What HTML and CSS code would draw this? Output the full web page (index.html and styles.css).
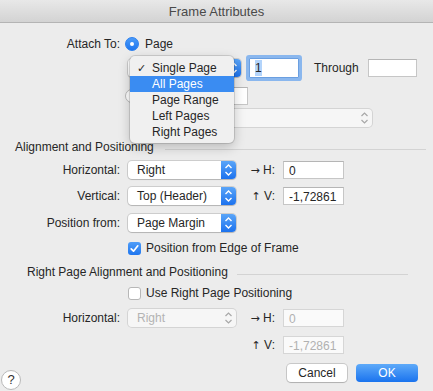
FILE: index.html
```html
<!DOCTYPE html>
<html lang="en">
<head>
  <meta charset="UTF-8">
  <title>Frame Attributes</title>
  <link rel="stylesheet" href="styles.css">
</head>
<body>
  <div class="window">
    <div class="titlebar">Frame Attributes</div>

    <div class="content">
      <!-- Attach to -->
      <div class="row attach">
        <span class="label">Attach To:</span>
        <span class="radio on"></span>
        <span class="radio-text">Page</span>
      </div>

      <div class="row range">
        <div class="popup page-popup">
          <span class="popup-text"></span>
          <span class="arrows blue">
            <svg width="15" height="18" viewBox="0 0 15 18"><path d="M4.5 7 L7.5 4 L10.5 7 M4.5 11 L7.5 14 L10.5 11" fill="none" stroke="#fff" stroke-width="1.4"/></svg>
          </span>
        </div>
        <div class="field focus num"><span class="sel">1</span></div>
        <span class="through">Through</span>
        <div class="field through-field"></div>
      </div>

      <div class="row other">
        <span class="radio"></span>
        <div class="field other-field"></div>
      </div>

      <div class="row master">
        <div class="popup disabled wide-popup">
          <span class="popup-text"></span>
          <span class="arrows">
            <svg width="15" height="18" viewBox="0 0 15 18"><path d="M4.5 7 L7.5 4 L10.5 7 M4.5 11 L7.5 14 L10.5 11" fill="none" stroke="#a8a8a8" stroke-width="1.2"/></svg>
          </span>
        </div>
      </div>

      <!-- Alignment and Positioning -->
      <div class="section first">
        <span>Alignment and Positioning</span>
        <span class="rule"></span>
      </div>

      <div class="row ctl">
        <span class="label">Horizontal:</span>
        <div class="popup">
          <span class="popup-text">Right</span>
          <span class="arrows blue">
            <svg width="15" height="18" viewBox="0 0 15 18"><path d="M4.5 7 L7.5 4 L10.5 7 M4.5 11 L7.5 14 L10.5 11" fill="none" stroke="#fff" stroke-width="1.4"/></svg>
          </span>
        </div>
        <span class="mini"><span class="arr">&rarr;</span> H:</span>
        <div class="field val">0</div>
      </div>

      <div class="row ctl vert">
        <span class="label">Vertical:</span>
        <div class="popup">
          <span class="popup-text">Top (Header)</span>
          <span class="arrows blue">
            <svg width="15" height="18" viewBox="0 0 15 18"><path d="M4.5 7 L7.5 4 L10.5 7 M4.5 11 L7.5 14 L10.5 11" fill="none" stroke="#fff" stroke-width="1.4"/></svg>
          </span>
        </div>
        <span class="mini"><span class="arr">&uarr;</span> V:</span>
        <div class="field val">-1,72861</div>
      </div>

      <div class="row ctl posfrom">
        <span class="label">Position from:</span>
        <div class="popup">
          <span class="popup-text">Page Margin</span>
          <span class="arrows blue">
            <svg width="15" height="18" viewBox="0 0 15 18"><path d="M4.5 7 L7.5 4 L10.5 7 M4.5 11 L7.5 14 L10.5 11" fill="none" stroke="#fff" stroke-width="1.4"/></svg>
          </span>
        </div>
      </div>

      <div class="row check-row edge">
        <span class="checkbox on">
          <svg width="13" height="13" viewBox="0 0 13 13"><path d="M3.2 6.8 L5.5 9.2 L9.8 3.8" fill="none" stroke="#fff" stroke-width="1.7" stroke-linecap="round" stroke-linejoin="round"/></svg>
        </span>
        <span>Position from Edge of Frame</span>
      </div>

      <!-- Right Page Alignment -->
      <div class="section second">
        <span>Right Page Alignment and Positioning</span>
        <span class="rule"></span>
      </div>

      <div class="row check-row use-right">
        <span class="checkbox"></span>
        <span>Use Right Page Positioning</span>
      </div>

      <div class="row ctl horiz2">
        <span class="label">Horizontal:</span>
        <div class="popup disabled">
          <span class="popup-text">Right</span>
          <span class="arrows">
            <svg width="15" height="18" viewBox="0 0 15 18"><path d="M4.5 7 L7.5 4 L10.5 7 M4.5 11 L7.5 14 L10.5 11" fill="none" stroke="#a8a8a8" stroke-width="1.2"/></svg>
          </span>
        </div>
        <span class="mini"><span class="arr">&rarr;</span> H:</span>
        <div class="field val disabled">0</div>
      </div>

      <div class="row ctl v2">
        <span class="label"></span>
        <span class="spacer"></span>
        <span class="mini"><span class="arr">&uarr;</span> V:</span>
        <div class="field val disabled">-1,72861</div>
      </div>

      <div class="footer">
        <span class="help">?</span>
        <button class="btn cancel">Cancel</button>
        <button class="btn ok">OK</button>
      </div>
    </div>

    <!-- open popup menu -->
    <div class="menu">
      <div class="item"><span class="tick">&#10003;</span>Single Page</div>
      <div class="item active">All Pages</div>
      <div class="item">Page Range</div>
      <div class="item">Left Pages</div>
      <div class="item">Right Pages</div>
    </div>
  </div>
</body>
</html>
```

FILE: styles.css
```css
/* General */
body {
  margin: 0;
  padding: 0;
  font-family: "Liberation Sans", Arial, sans-serif;
  font-size: 12px;
  color: #262626;
  background: #ececec;
}

.window {
  position: relative;
  width: 433px;
  height: 391px;
  overflow: hidden;
  background: #ececec;
}

.titlebar {
  height: 22px;
  line-height: 24px;
  text-align: center;
  font-size: 13px;
  color: #4a4a4a;
  background: linear-gradient(#e8e8e8, #d3d3d3);
  border-bottom: 1px solid #b4b4b4;
}

.content {
  display: flex;
  flex-direction: column;
}

.row {
  display: flex;
  align-items: center;
  height: 20px;
}

.label {
  width: 120px;
  text-align: right;
  margin-right: 8px;
  flex-shrink: 0;
}

/* Attach */
.attach { margin-top: 11px; }
.attach .label { margin-right: 5px; }

.radio {
  width: 12px;
  height: 12px;
  border-radius: 50%;
  background: #fff;
  border: 1px solid #b9b9b9;
  flex-shrink: 0;
  position: relative;
}

.radio.on {
  border-color: #2a7ff0;
  background: linear-gradient(#4b9bf8, #1f76ef);
}

.radio.on::after {
  content: "";
  position: absolute;
  left: 4px;
  top: 4px;
  width: 4px;
  height: 4px;
  border-radius: 50%;
  background: #fff;
}

.radio-text { margin-left: 6px; }

.range { margin-top: 4px; }
.other { margin-top: 8px; }
.other .radio { margin-left: 125px; }
.master { margin-top: 2px; }

/* Popup buttons */
.popup {
  display: flex;
  align-items: center;
  width: 108px;
  height: 18px;
  background: #fff;
  border-radius: 4px;
  box-shadow: 0 0 0 1px rgba(0, 0, 0, 0.13), 0 1px 1px rgba(0, 0, 0, 0.12);
  flex-shrink: 0;
}

.popup-text {
  flex: 1;
  padding-left: 9px;
  white-space: nowrap;
}

.arrows {
  width: 15px;
  height: 18px;
  display: flex;
  border-radius: 0 4px 4px 0;
}

.arrows.blue {
  background: linear-gradient(#5aa5f8, #1c72ee);
}

.popup.disabled {
  background: #f6f6f6;
  color: #b3b3b3;
  box-shadow: 0 0 0 1px rgba(0, 0, 0, 0.1);
}

.page-popup {
  width: 113px;
  margin-left: 128px;
}

.wide-popup {
  width: 222px;
  margin-left: 150px;
}

/* Text fields */
.field {
  height: 18px;
  line-height: 18px;
  background: #fff;
  border: 1px solid #c6c6c6;
  border-top-color: #b5b5b5;
  box-sizing: border-box;
  padding-left: 5px;
  flex-shrink: 0;
}

.field.num {
  width: 50px;
  height: 20px;
  line-height: 18px;
  margin-left: 8px;
}

.field.focus {
  box-shadow: 0 0 0 3px #8ab7ee;
  border-color: #6b9fe0;
  border-radius: 1px;
}

.sel {
  background: #b3d4fb;
  padding: 1px 0;
}

.through { margin-left: 15px; }

.through-field {
  width: 49px;
  margin-left: 9px;
}

.other-field {
  width: 97px;
  margin-left: 12px;
}

.field.val {
  width: 61px;
  margin-left: 8px;
}

.field.disabled {
  background: #fafafa;
  color: #b1b1b1;
  border-color: #d6d6d6;
}

.mini {
  width: 39px;
  text-align: right;
  flex-shrink: 0;
}

.arr {
  font-family: "DejaVu Sans", sans-serif;
  font-size: 11px;
}

.spacer {
  width: 108px;
  flex-shrink: 0;
}

.ctl { margin-top: 5px; }
.vert { margin-top: 6px; }
.posfrom { margin-top: 7px; }

/* Sections */
.section {
  display: flex;
  align-items: center;
  height: 16px;
}

.section .rule {
  flex: 1;
  height: 1px;
  background: #d3d3d3;
  margin-top: 4px;
}

.section.first {
  margin-top: 11px;
  padding-left: 15px;
}

.section.first .rule {
  margin-left: 11px;
  margin-right: 7px;
}

.section.second {
  margin-top: 7px;
  padding-left: 27px;
}

.section.second .rule {
  margin-left: 9px;
  margin-right: 25px;
}

/* Checkboxes */
.check-row {
  height: 18px;
  padding-left: 128px;
}

.checkbox {
  width: 13px;
  height: 13px;
  box-sizing: border-box;
  border-radius: 3px;
  background: #fff;
  border: 1px solid #b7b7b7;
  margin-right: 5px;
  display: flex;
}

.checkbox.on {
  border: none;
  background: linear-gradient(#4f9df8, #1f76ef);
}

.edge { margin-top: 6px; }
.use-right { margin-top: 4px; }
.horiz2 { margin-top: 6px; }
.v2 { margin-top: 7px; }

/* Footer */
.footer {
  display: flex;
  align-items: flex-start;
  height: 20px;
  margin-top: 9px;
}

.help {
  width: 18px;
  height: 18px;
  margin: 6px 0 0 1px;
  border-radius: 50%;
  background: #fff;
  border: 1px solid #b9b9b9;
  text-align: center;
  line-height: 18px;
  font-size: 13px;
  color: #333;
}

.btn {
  height: 18px;
  border: none;
  border-radius: 4px;
  font-family: inherit;
  font-size: 12px;
  padding: 0;
}

.cancel {
  width: 60px;
  margin-left: auto;
  background: #fff;
  color: #262626;
  box-shadow: 0 0 0 1px rgba(0, 0, 0, 0.15), 0 1px 1px rgba(0, 0, 0, 0.12);
}

.ok {
  width: 62px;
  margin-left: 9px;
  margin-right: 15px;
  background: linear-gradient(#5eaaf9, #1a73ee);
  color: #fff;
}

/* Open menu */
.menu {
  position: absolute;
  left: 130px;
  top: 56px;
  width: 104px;
  padding: 4px 0 3px 0;
  background: #f0f0f0;
  border-radius: 5px;
  box-shadow: 0 0 0 1px rgba(0, 0, 0, 0.12), 0 4px 12px rgba(0, 0, 0, 0.22);
}

.item {
  position: relative;
  height: 16px;
  line-height: 16px;
  padding-left: 22px;
  color: #262626;
}

.item.active {
  background: #3a8cf2;
  color: #fff;
}

.tick {
  position: absolute;
  left: 7px;
  font-size: 11px;
}
```
